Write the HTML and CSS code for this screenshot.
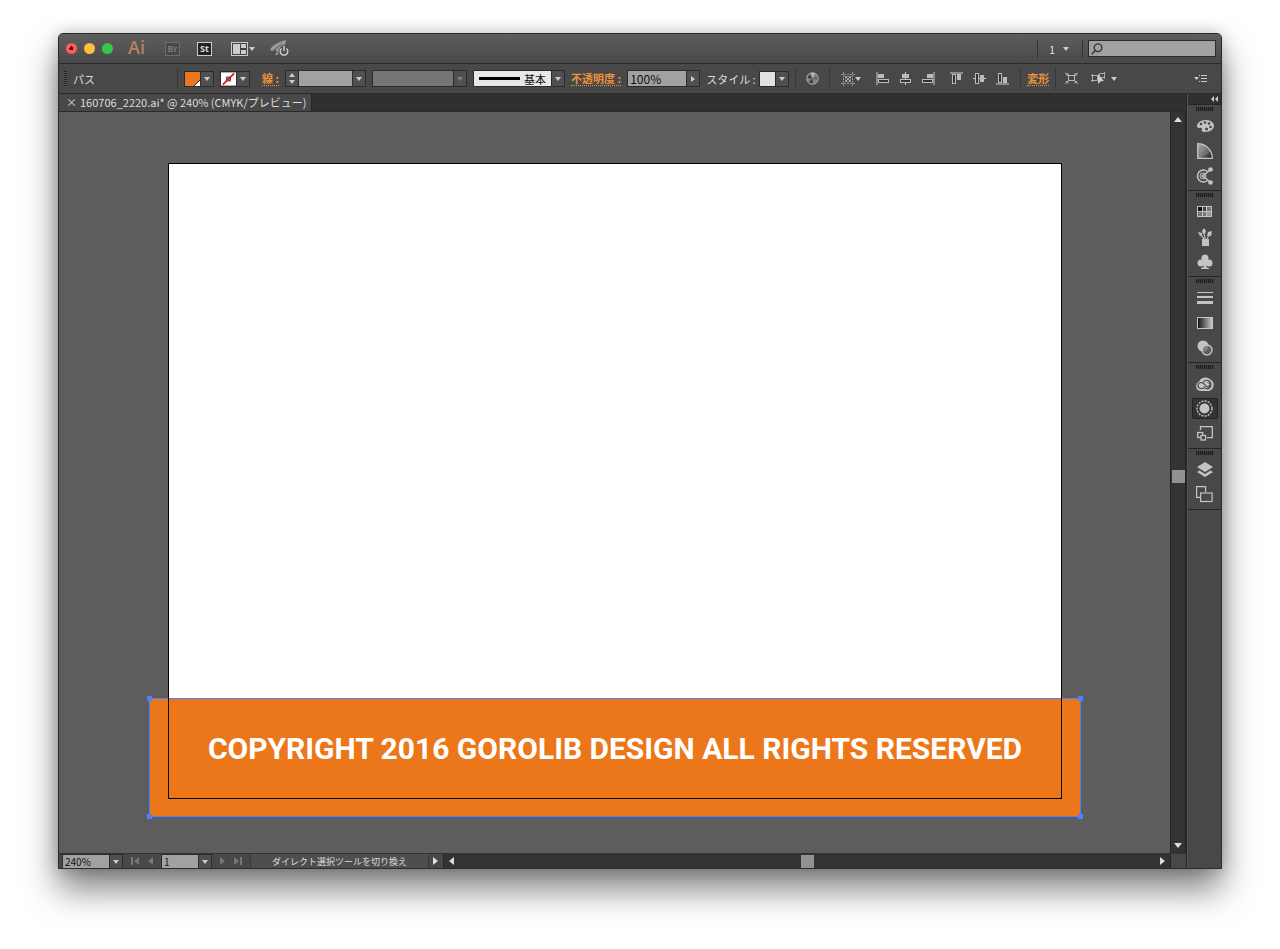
FILE: index.html
```html
<!DOCTYPE html>
<html lang="ja">
<head>
    <meta charset="UTF-8">
    <meta name="viewport" content="width=device-width, initial-scale=1.0">
    <title>160706_2220.ai</title>
    <link rel="stylesheet" href="styles.css">
</head>
<body>
    <div class="window">
        <header class="titlebar">
            <div class="lights">
                <button class="light red" aria-label="閉じる"></button>
                <button class="light yellow" aria-label="しまう"></button>
                <button class="light green" aria-label="拡大"></button>
            </div>
            <span class="logo">Ai</span>
            <button class="app-box dim">Br</button>
            <button class="app-box">St</button>
            <button class="icon-btn layout-btn" aria-label="レイアウト">
                <svg width="17" height="14" viewBox="0 0 17 14"><rect x=".5" y=".5" width="16" height="13" fill="#444" stroke="#ccc"/><path fill="#ccc" d="M2 2h7v10H2zM10 2h5v4h-5zM10 8h5v4h-5z"/></svg>
                <i class="arrow"></i>
            </button>
            <button class="icon-btn" aria-label="GPU パフォーマンス">
                <svg width="20" height="17" viewBox="0 0 20 17"><path fill="#999" d="M0 10C2 5 8 2 16 0c0 3-1 4-3 6-3 1-4 4-4 6l-2 1-1-3-2 0-2 1z"/><path d="M4 10l8-6M7 13l6-8" stroke="#555"/><path fill="#999" d="M5 15l3-4v4z"/><circle cx="14" cy="11" r="5" fill="#505050"/><path d="M11.500 8.500a3.800 3.800 0 1 0 5 0M14 6v5" fill="none" stroke="#ccc" stroke-width="1.500"/></svg>
            </button>
            <button class="workspace">1 <i class="arrow"></i></button>
            <label class="search">
                <svg width="12" height="12" viewBox="0 0 12 12" fill="none" stroke="#333" stroke-width="1.400"><circle cx="7" cy="4.700" r="3.800"/><path d="M4.200 7.600L.7 11.300"/></svg>
                <input type="search" aria-label="検索">
            </label>
        </header>

        <div class="controls">
            <i class="grip"></i>
            <span class="kind">パス</span>
            <i class="sep"></i>
            <button class="swatch-btn" aria-label="塗り"><span class="swatch fill"></span><span class="cell"><i class="arrow"></i></span></button>
            <button class="swatch-btn" aria-label="線のカラー">
                <svg class="swatch" width="16" height="14" viewBox="0 0 16 14"><rect width="16" height="14" fill="#fff"/><rect x="6" y="5" width="4" height="4" fill="#aaa" stroke="#333"/><path d="M2 13L14 1" stroke="#e3131b" stroke-width="1.800"/></svg>
                <span class="cell"><i class="arrow"></i></span>
            </button>
            <label class="link stroke-label" for="stroke">線 :</label>
            <div class="combo">
                <span class="cell stepper"><i class="arrow up"></i><i class="arrow"></i></span>
                <input class="w-stroke" id="stroke" type="text">
                <button class="cell" aria-label="線幅"><i class="arrow"></i></button>
            </div>
            <div class="combo off">
                <input class="w-profile" type="text" aria-label="プロファイル" disabled>
                <button class="cell" aria-label="プロファイルを選択" disabled><i class="arrow"></i></button>
            </div>
            <div class="combo brush">
                <select aria-label="ブラシ"><option>基本</option></select>
                <span class="cell"><i class="arrow"></i></span>
            </div>
            <label class="link" for="opacity">不透明度 :</label>
            <div class="combo">
                <input class="w-opacity" id="opacity" type="text" value="100%">
                <button class="cell" aria-label="不透明度を選択"><i class="arrow right"></i></button>
            </div>
            <span class="style-label">スタイル :</span>
            <button class="swatch-btn" aria-label="スタイル"><span class="swatch plain"></span><span class="cell"><i class="arrow"></i></span></button>
            <i class="sep"></i>
            <button class="icon-btn recolor" aria-label="オブジェクトを再配色">
                <svg width="13" height="13" viewBox="0 0 13 13"><circle cx="6.500" cy="6.500" r="5.800" fill="#808080" stroke="#aaa"/><path fill="#333" d="M6.500 6.500L1.500 6l2-3.500zM6.500 6.500L3 10.500l3.500 1z"/><path fill="#bbb" d="M6.500 6.500L5 .8l4 .5z"/><path fill="#666" d="M6.500 6.500L11.500 4v4z"/></svg>
            </button>
            <i class="sep"></i>
            <div class="align">
                <button class="icon-btn align-to" aria-label="整列対象">
                    <svg width="14" height="14" viewBox="0 0 14 14" fill="none" stroke="#999"><path stroke-dasharray="2 1" d="M2.500 0v14M11.500 0v14M0 2.500h14M0 11.500h14"/><path stroke="#aaa" d="M4.500 6.500v-2h2M9.500 6.500v-2h-2M4.500 7.500v2h2M9.500 7.500v2h-2M5 5l4 4M9 5l-4 4"/></svg>
                    <i class="arrow"></i>
                </button>
                <div class="align-set">
                    <button class="icon-btn" aria-label="水平方向左に整列"><svg width="13" height="13" viewBox="0 0 13 13"><path d="M1 0v13" stroke="#ccc"/><path fill="#bbb" d="M2 2h6v4H2z"/><rect x="2.500" y="7.500" width="10" height="3" fill="#333" stroke="#bbb"/></svg></button>
                    <button class="icon-btn" aria-label="水平方向中央に整列"><svg width="13" height="13" viewBox="0 0 13 13"><path d="M6.500 0v13" stroke="#ccc"/><path fill="#bbb" d="M3 2h7v4H3z"/><rect x="1.500" y="7.500" width="10" height="3" fill="#333" stroke="#bbb"/></svg></button>
                    <button class="icon-btn" aria-label="水平方向右に整列"><svg width="13" height="13" viewBox="0 0 13 13"><path d="M12 0v13" stroke="#ccc"/><path fill="#bbb" d="M5 2h6v4H5z"/><rect x=".5" y="7.500" width="10" height="3" fill="#333" stroke="#bbb"/></svg></button>
                </div>
                <div class="align-set">
                    <button class="icon-btn" aria-label="垂直方向上に整列"><svg width="13" height="13" viewBox="0 0 13 13"><path d="M0 1h13" stroke="#ccc"/><rect x="2.500" y="2.500" width="3" height="9" fill="#333" stroke="#bbb"/><path fill="#bbb" d="M7 2h4v6H7z"/></svg></button>
                    <button class="icon-btn" aria-label="垂直方向中央に整列"><svg width="13" height="13" viewBox="0 0 13 13"><path d="M0 6.500h13" stroke="#ccc"/><rect x="2.500" y="1.500" width="3" height="10" fill="#333" stroke="#bbb"/><path fill="#bbb" d="M7 3h4v7H7z"/></svg></button>
                    <button class="icon-btn" aria-label="垂直方向下に整列"><svg width="13" height="13" viewBox="0 0 13 13"><path d="M0 12h13" stroke="#ccc"/><rect x="2.500" y="1.500" width="3" height="9" fill="#333" stroke="#bbb"/><path fill="#bbb" d="M7 5h4v6H7z"/></svg></button>
                </div>
            </div>
            <i class="sep"></i>
            <a class="link" href="#">変形</a>
            <i class="sep"></i>
            <button class="icon-btn isolate" aria-label="選択オブジェクトを編集"><svg width="13" height="13" viewBox="0 0 13 13" fill="none" stroke="#bbb"><rect x="3.500" y="3.500" width="6" height="5"/><path d="M0 1l3 2M13 1l-3 2M0 12l3-3M13 12l-3-3M1 3h2V1M12 3h-2V1M1 9.500h2v2M12 9.500h-2v2"/></svg></button>
            <button class="icon-btn similar" aria-label="共通オブジェクトを選択">
                <svg width="15" height="13" viewBox="0 0 15 13"><path d="M1.500 3.500h5v5h-5zM8.500 1.500h5v4h-5zM0 3.500h8M0 8.500h6M1.500 2v8M13.500 0v7" fill="none" stroke="#aaa"/><path d="M7 2l6 7-3 .2L7 12z" fill="#ccc"/></svg>
                <i class="arrow"></i>
            </button>
            <button class="icon-btn panel-menu" aria-label="メニュー"><svg width="13" height="9" viewBox="0 0 13 9"><path fill="#ccc" d="M0 3h5L2.500 6zM5 1h1v1H5zM7 1h6v1H7zM7 4h6v1H7zM5 7h1v1H5zM7 7h6v1H7z"/></svg></button>
        </div>

        <div class="workarea">
            <main class="document">
                <div class="tabs">
                    <div class="tab"><button class="close" aria-label="タブを閉じる">×</button>160706_2220.ai* @ 240% (CMYK/プレビュー)</div>
                </div>
                <div class="view">
                    <div class="canvas">
                        <div class="artboard">
                            <div class="banner">
                                <span>COPYRIGHT 2016 GOROLIB DESIGN ALL RIGHTS RESERVED</span>
                                <i class="handle tl"></i><i class="handle tr"></i><i class="handle bl"></i><i class="handle br"></i>
                            </div>
                        </div>
                    </div>
                    <div class="vscroll"><i class="arrow big up"></i><i class="thumb"></i><i class="arrow big"></i></div>
                </div>
                <footer class="status">
                    <div class="combo">
                        <input class="w-zoom" type="text" value="240%" aria-label="ズーム">
                        <button class="cell" aria-label="ズームを選択"><i class="arrow"></i></button>
                    </div>
                    <div class="nav">
                        <button class="icon-btn" aria-label="最初"><svg width="9" height="8" viewBox="0 0 9 8"><path fill="#777" d="M0 0h2v8H0zM8 0v8L3 4z"/></svg></button>
                        <button class="icon-btn" aria-label="前へ"><svg width="5" height="8" viewBox="0 0 5 8"><path fill="#777" d="M5 0v8L0 4z"/></svg></button>
                    </div>
                    <div class="combo">
                        <input class="w-page" type="text" value="1" aria-label="アートボード">
                        <button class="cell" aria-label="アートボードを選択"><i class="arrow"></i></button>
                    </div>
                    <div class="nav">
                        <button class="icon-btn" aria-label="次へ"><svg width="5" height="8" viewBox="0 0 5 8"><path fill="#777" d="M0 0v8l5-4z"/></svg></button>
                        <button class="icon-btn" aria-label="最後"><svg width="9" height="8" viewBox="0 0 9 8"><path fill="#777" d="M7 0h2v8H7zM1 0v8l5-4z"/></svg></button>
                    </div>
                    <span class="tool">ダイレクト選択ツールを切り換え</span>
                    <button class="play" aria-label="表示"><i class="arrow big right"></i></button>
                    <div class="hscroll"><i class="arrow big left"></i><i class="thumb"></i><i class="arrow big right"></i></div>
                    <i class="corner"></i>
                </footer>
            </main>

            <aside class="dock">
                <div class="dock-head"><svg width="7" height="6" viewBox="0 0 7 6"><path fill="#ccc" d="M3 0v6L0 3zM7 0v6L4 3z"/></svg></div>
                <div class="group">
                    <i class="dots"></i>
                    <button class="tool-btn" aria-label="カラー"><svg width="18" height="14" viewBox="0 0 18 14"><path fill="#c4c4c4" d="M1 7c0-4 5-6 9-6 5 0 8 3 8 6s-4 6-9 6c-3 0-4-1-3-3 0-2-2-1-3-1-1 0-2-1-2-2z"/><g fill="#444"><circle cx="5" cy="5" r="1.300"/><circle cx="9" cy="3.500" r="1.300"/><circle cx="13" cy="4.500" r="1.300"/><circle cx="14.500" cy="8" r="1.300"/><circle cx="10.500" cy="10" r="1.500"/></g></svg></button>
                    <button class="tool-btn" aria-label="カラーガイド"><svg width="16" height="16" viewBox="0 0 16 16"><defs><linearGradient id="guide" x1="0" y1="0" x2="1" y2="1"><stop stop-color="#aaa"/><stop offset=".5" stop-color="#777"/><stop offset="1" stop-color="#111"/></linearGradient></defs><path d="M.7.7C9 .7 15.300 7 15.300 15.300H.7z" fill="url(#guide)" stroke="#c4c4c4" stroke-width="1.300"/><path d="M1 15L8 3M1 15l12-7" stroke="#999" stroke-width=".6"/></svg></button>
                    <button class="tool-btn" aria-label="カラーテーマ"><svg width="17" height="18" viewBox="0 0 17 18" fill="none" stroke="#c4c4c4"><path stroke-width="1.500" d="M11.500 4.500a6 6 0 1 0 0 9"/><circle cx="7" cy="9" r="3"/><path stroke-width="1.300" d="M7 9l7-6M7 9l7 6"/><g fill="#c4c4c4" stroke="none"><circle cx="7" cy="9" r="1.500"/><circle cx="14.500" cy="2.500" r="2.300"/><circle cx="14.500" cy="15.500" r="2.300"/></g></svg></button>
                </div>
                <div class="group">
                    <i class="dots"></i>
                    <button class="tool-btn" aria-label="スウォッチ"><svg width="15" height="11" viewBox="0 0 15 11"><path fill="#c4c4c4" d="M0 0h15v11H0z"/><path fill="#111" d="M1 1h4v4H1z"/><path fill="#444" d="M6 1h3v4H6z"/><path fill="#777" d="M10 1h4v4h-4zM1 6h4v4H1zM6 6h3v4H6z"/><path fill="#999" d="M10 6h4v4h-4z"/></svg></button>
                    <button class="tool-btn" aria-label="ブラシ"><svg width="14" height="18" viewBox="0 0 14 18"><g fill="#c4c4c4"><path d="M4 11h7v7H4zM6 0l2 3-1 3H5L4 3zM0 4l4 1v3L2 8zM14 3l-1 5H9l1-4z"/></g><path d="M6 5l1 6M3 7l3 4M11 7l-2 4" stroke="#b0b0b0" stroke-width="1.300"/></svg></button>
                    <button class="tool-btn" aria-label="シンボル"><svg width="16" height="15" viewBox="0 0 16 15"><g fill="#c4c4c4"><circle cx="8" cy="4" r="3.500"/><circle cx="4" cy="9" r="3.500"/><circle cx="12" cy="9" r="3.500"/><path d="M6 6h4l-1 5c0 2 1 3 3 3v1H4v-1c2 0 3-1 3-3z"/></g></svg></button>
                </div>
                <div class="group">
                    <i class="dots"></i>
                    <button class="tool-btn" aria-label="線"><svg width="16" height="12" viewBox="0 0 16 12"><path fill="#c4c4c4" d="M0 0h16v1H0zM0 4h16v2H0zM0 9h16v3H0z"/></svg></button>
                    <button class="tool-btn" aria-label="グラデーション"><svg width="16" height="12" viewBox="0 0 16 12"><defs><linearGradient id="grad"><stop stop-color="#111"/><stop offset="1" stop-color="#ccc"/></linearGradient></defs><rect x=".5" y=".5" width="15" height="11" fill="url(#grad)" stroke="#c4c4c4"/></svg></button>
                    <button class="tool-btn" aria-label="透明"><svg width="16" height="16" viewBox="0 0 16 16"><circle cx="6" cy="6" r="5.500" fill="#c4c4c4"/><circle cx="10" cy="10" r="5" fill="#666" fill-opacity=".7" stroke="#c4c4c4" stroke-width="1.400"/></svg></button>
                </div>
                <div class="group">
                    <i class="dots"></i>
                    <button class="tool-btn" aria-label="CC ライブラリ"><svg width="19" height="14" viewBox="0 0 19 14"><path fill="#c4c4c4" d="M5.500 14a5 5 0 0 1-1.500-9.500C6 0 12-.5 14.500 2 18 3 19 6 18.500 9c-.5 3-3 5-6 5z"/><g fill="none" stroke="#444" stroke-width="1.200"><path d="M9 11.500H6a3 3 0 0 1 0-6c2 0 3 1 4.500 3"/><path d="M8 5.500a4.300 4.300 0 1 1 4.500 6.300c-2 0-3-1-4-2.300"/><path d="M10.500 8a2.200 2.200 0 1 0 2-2.500"/></g></svg></button>
                    <button class="tool-btn active" aria-label="アピアランス"><svg width="17" height="17" viewBox="0 0 17 17"><circle cx="8.500" cy="8.500" r="5" fill="#c4c4c4"/><circle cx="8.500" cy="8.500" r="7.500" fill="none" stroke="#c4c4c4" stroke-width="1.400" stroke-dasharray="2 1.200"/></svg></button>
                    <button class="tool-btn" aria-label="グラフィックスタイル"><svg width="16" height="15" viewBox="0 0 16 15" fill="none" stroke="#c4c4c4" stroke-width="1.300"><path d="M3.500 4V.7h11.800v11H10"/><rect x=".7" y="6.500" width="5" height="5"/><rect x="4" y="9.500" width="4.500" height="4.500" fill="#444"/></svg></button>
                </div>
                <div class="group">
                    <i class="dots"></i>
                    <button class="tool-btn" aria-label="レイヤー"><svg width="16" height="16" viewBox="0 0 16 16"><path fill="#c4c4c4" d="M8 0l8 5-8 5-8-5zM2.500 8.500L8 12l5.500-3.500L16 10l-8 5-8-5z"/></svg></button>
                    <button class="tool-btn" aria-label="アートボード"><svg width="17" height="17" viewBox="0 0 17 17" fill="none" stroke="#c4c4c4" stroke-width="1.200"><path d="M4 11.400H.6V.6h9V6"/><rect x="4.600" y="7" width="11.500" height="8.500"/></svg></button>
                </div>
            </aside>
        </div>
    </div>
</body>
</html>
```

FILE: styles.css
```css
* {
    box-sizing: border-box;
}
body {
    margin: 0;
    padding: 33px 58px 80px;
    background: #fff;
    color: #ddd;
    font: 11px/16px "Noto Sans CJK JP", sans-serif;
}
button, input, select {
    margin: 0;
    padding: 0;
    border: none;
    border-radius: 0;
    background: none;
    color: inherit;
    font: inherit;
}
svg {
    display: block;
    flex: none;
}
.window {
    border: 1px solid #2b2b2b;
    border-radius: 5px 5px 0 0;
    background: #484848;
    box-shadow: 0 20px 34px rgba(0, 0, 0, .5), 0 0 16px rgba(0, 0, 0, .2);
}

/* title bar */
.titlebar {
    display: flex;
    align-items: center;
    height: 30px;
    padding: 0 5px 0 7px;
    border-bottom: 1px solid #2b2b2b;
    border-radius: 4px 4px 0 0;
    background: linear-gradient(#5e5e5e, #484848);
}
.lights {
    display: flex;
    gap: 7px;
    margin-right: 15px;
}
.light {
    width: 11px;
    height: 11px;
    border-radius: 50%;
}
.red {
    background: radial-gradient(circle, #400 2px, #fc5b57 2px);
}
.yellow {
    background: #fdbd3f;
}
.green {
    background: #34c84a;
}
.logo {
    width: 37px;
    padding-bottom: 4px;
    color: #b98264;
    font: 600 18px/20px "Open Sans", sans-serif;
}
.app-box {
    width: 15px;
    height: 14px;
    margin-right: 17px;
    border: 1px solid #ccc;
    background: #222;
    color: #ddd;
    font: bold 9px/12px "Open Sans", sans-serif;
}
.app-box.dim {
    border-color: #6c6c6c;
    background: #484848;
    color: #777;
}
.icon-btn {
    display: flex;
    align-items: center;
    flex: none;
}
.layout-btn {
    gap: 1px;
    margin: 0 15px 0 2px;
}
.arrow {
    flex: none;
    width: 0;
    height: 0;
    border: 3px solid transparent;
    border-top: 4px solid #ccc;
    border-bottom: 0;
}
.arrow.up {
    border-top: 0;
    border-bottom: 4px solid #ccc;
}
.arrow.right {
    border: 3px solid transparent;
    border-left: 4px solid #ccc;
    border-right: 0;
}
.arrow.big {
    border-width: 5px 4px 0;
    border-top-color: #ddd;
}
.arrow.big.up {
    border-width: 0 4px 5px;
    border-bottom-color: #ddd;
}
.arrow.big.right {
    border: 4px solid transparent;
    border-left: 5px solid #ddd;
    border-right: 0;
}
.arrow.big.left {
    border: 4px solid transparent;
    border-right: 5px solid #ddd;
    border-left: 0;
}
.workspace {
    display: flex;
    align-items: center;
    justify-content: center;
    gap: 8px;
    width: 46px;
    height: 18px;
    margin: 0 5px 0 auto;
    padding-right: 2px;
    border: solid #333;
    border-width: 0 1px;
}
.search {
    display: flex;
    align-items: center;
    width: 128px;
    height: 17px;
    padding-left: 2px;
    border: 1px solid #2b2b2b;
    background: #a1a1a1;
}
.search input {
    min-width: 0;
    flex: 1;
    color: #222;
}

/* control bar */
.controls {
    display: flex;
    align-items: center;
    gap: 6px;
    height: 30px;
    padding: 0 14px 0 5px;
    border-bottom: 1px solid #2b2b2b;
    background: #484848;
    white-space: nowrap;
}
.grip {
    width: 3px;
    height: 16px;
    background: repeating-linear-gradient(#222 0 1px, #555 1px 2px);
}
.kind {
    width: 98px;
}
.sep {
    width: 1px;
    height: 22px;
    background: #383838;
}
.swatch-btn {
    display: flex;
    flex: none;
    height: 16px;
    border: 1px solid #2b2b2b;
}
.swatch-btn .swatch {
    width: 15px;
    height: 14px;
}
.swatch.fill {
    background: linear-gradient(135deg, #ec761c 76%, #222 76% 80%, #fff 80%);
}
.swatch.plain {
    background: #e2e2e2;
}
.cell {
    display: flex;
    align-items: center;
    justify-content: center;
    flex: none;
    width: 13px;
    border-left: 1px solid #2b2b2b;
    background: #505050;
}
.combo {
    display: flex;
    flex: none;
    height: 17px;
    border: 1px solid #2b2b2b;
}
.combo input {
    padding-left: 2px;
    background: #a1a1a1;
    color: #111;
    font-size: 12px;
}
.combo .stepper {
    flex-direction: column;
    gap: 3px;
    border-left: 0;
    border-right: 1px solid #2b2b2b;
}
.combo.off input {
    background: #757575;
}
.combo.off .arrow {
    opacity: .4;
}
.w-stroke {
    width: 53px;
}
.w-profile {
    width: 80px;
}
.w-opacity {
    width: 58px;
}
.w-zoom {
    width: 46px;
}
.w-page {
    width: 36px;
}
.brush select {
    width: 77px;
    padding-left: 50px;
    background: linear-gradient(#000, #000) 5px 6px / 41px 3px no-repeat #e8e8e8;
    color: #111;
    appearance: none;
}
.link {
    border-bottom: 1px dotted #e8923e;
    color: #e8923e;
    font-weight: bold;
    line-height: 14px;
    text-decoration: none;
}
.stroke-label {
    margin-left: 6px;
}
.style-label {
    width: 47px;
}
.recolor {
    margin: 0 4px;
}
.align {
    display: flex;
    gap: 15px;
    margin: 0 5px;
}
.align-set {
    display: flex;
    gap: 10px;
}
.isolate {
    margin: 0 7px 0 3px;
}
.similar {
    gap: 5px;
}
.panel-menu {
    margin-left: auto;
}

/* document */
.workarea {
    display: flex;
}
.document {
    flex: 1;
    min-width: 0;
    border-right: 1px solid #262626;
}
.tabs {
    display: flex;
    height: 18px;
    border-bottom: 1px solid #2b2b2b;
    background: #303030;
}
.tab {
    display: flex;
    gap: 5px;
    padding: 0 4px 0 7px;
    border-right: 1px solid #262626;
    background: #484848;
    line-height: 17px;
}
.close {
    width: 9px;
}
.view {
    display: flex;
}
.canvas {
    flex: 1;
    padding: 51px 108px 54px 109px;
    background: #5d5d5d;
}
.artboard {
    position: relative;
    aspect-ratio: 894 / 636;
    background: #fff;
}
/* the artboard edge stays visible over the artwork */
.artboard::after {
    content: "";
    position: absolute;
    inset: 0;
    border: 1px solid #000;
}
.banner {
    position: absolute;
    left: -19px;
    right: -19px;
    bottom: -18px;
    display: flex;
    align-items: center;
    justify-content: center;
    height: 119px;
    padding-bottom: 18px;
    border: 1px solid #4f80ff;
    background: #ec771b;
    color: #fff;
    font: bold 30px/40px Roboto, sans-serif;
    white-space: nowrap;
}
.handle {
    position: absolute;
    width: 5px;
    height: 5px;
    background: #4f80ff;
}
.tl, .tr {
    top: -3px;
}
.bl, .br {
    bottom: -3px;
}
.tl, .bl {
    left: -3px;
}
.tr, .br {
    right: -3px;
}
.vscroll {
    display: flex;
    flex-direction: column;
    align-items: center;
    justify-content: space-between;
    width: 16px;
    padding: 5px 0;
    border: 1px solid #262626;
    border-width: 0 1px;
    background: #333;
}
.thumb {
    width: 13px;
    height: 13px;
    background: #929292;
}
.vscroll .thumb {
    margin-bottom: 12px;
}

/* status bar */
.status {
    display: flex;
    height: 15px;
    padding-left: 3px;
    border-top: 1px solid #333;
    overflow: hidden;
}
.status .combo {
    height: 14px;
    border-bottom: 0;
}
.status input {
    font-size: 10px;
}
.nav {
    display: flex;
    gap: 8px;
    padding: 0 8px;
}
.tool {
    width: 179px;
    border: solid #383838;
    border-width: 0 1px;
    background: #4e4e4e;
    font-size: 9px;
    line-height: 15px;
    text-align: center;
}
.play {
    display: flex;
    align-items: center;
    width: 14px;
    padding-left: 4px;
}
.hscroll {
    display: flex;
    align-items: center;
    justify-content: space-between;
    flex: 1;
    padding: 0 5px;
    border: solid #262626;
    border-width: 0 1px;
    background: #333;
}
.corner {
    width: 15px;
}

/* panel dock */
.dock {
    width: 34px;
    border-left: 1px solid #555;
}
.dock-head {
    display: flex;
    align-items: center;
    justify-content: flex-end;
    height: 11px;
    padding-right: 3px;
    border-bottom: 1px solid #262626;
    background: #303030;
}
.group {
    display: flex;
    flex-direction: column;
    align-items: center;
    padding: 2px 0;
    border-bottom: 1px solid #262626;
}
.dots {
    width: 18px;
    height: 4px;
    margin-bottom: 2px;
    background: repeating-linear-gradient(90deg, #1c1c1c 0 1px, #3c3c3c 1px 2px);
}
.tool-btn {
    display: flex;
    align-items: center;
    justify-content: center;
    width: 26px;
    height: 25px;
}
.tool-btn.active {
    height: 21px;
    margin: 2px 0;
    border: 1px solid #222;
    border-radius: 2px;
    background: #333;
}
```
